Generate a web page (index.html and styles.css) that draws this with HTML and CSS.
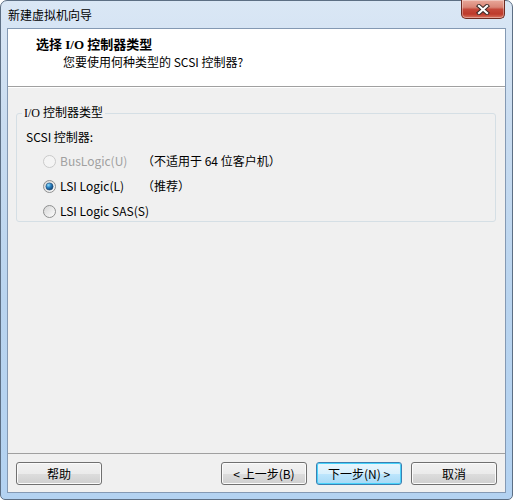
FILE: index.html
```html
<!DOCTYPE html>
<html lang="zh-CN">
<head>
  <meta charset="UTF-8" />
  <title>新建虚拟机向导</title>
  <link rel="stylesheet" href="styles.css">
</head>

<body>
  <svg class="defs" width="0" height="0">
    <defs>
      <linearGradient id="radioFill" x1="0" y1="0" x2="1" y2="1">
        <stop offset="0" stop-color="#d4d4d4" />
        <stop offset="1" stop-color="#ffffff" />
      </linearGradient>
      <radialGradient id="radioDot" cx="0.35" cy="0.3" r="0.8">
        <stop offset="0" stop-color="#8fe0ff" />
        <stop offset="0.45" stop-color="#2a7fbf" />
        <stop offset="1" stop-color="#0d3561" />
      </radialGradient>
    </defs>
  </svg>

  <div class="window">
    <div class="titlebar">
      <span class="title">新建虚拟机向导</span>
      <div class="close-btn">
        <svg width="14" height="11" viewBox="0 0 14 11">
          <path d="M3 2 L11 9 M11 2 L3 9" stroke="#3b2a28" stroke-width="4.2" stroke-linecap="square" />
          <path d="M3 2 L11 9 M11 2 L3 9" stroke="#ffffff" stroke-width="2.2" stroke-linecap="square" />
        </svg>
      </div>
    </div>

    <div class="client">
      <div class="header">
        <div class="header-title">选择 I/O 控制器类型</div>
        <div class="header-sub">您要使用何种类型的 SCSI 控制器?</div>
      </div>

      <div class="content">
        <fieldset class="group">
          <legend>I/O 控制器类型</legend>
          <div class="group-label">SCSI 控制器:</div>

          <div class="radio-row disabled">
            <label class="radio-label">
              <svg class="radio" width="13" height="13" viewBox="0 0 13 13">
                <circle cx="6.5" cy="6.5" r="6" fill="#f4f4f4" stroke="#c9c9c9" />
              </svg>
              BusLogic(U)
            </label>
            <span class="note">（不适用于 64 位客户机）</span>
          </div>

          <div class="radio-row">
            <label class="radio-label">
              <svg class="radio" width="13" height="13" viewBox="0 0 13 13">
                <circle cx="6.5" cy="6.5" r="6" fill="url(#radioFill)" stroke="#8e8f8f" />
                <circle cx="6.5" cy="6.5" r="3.6" fill="url(#radioDot)" stroke="#1e4e7a" stroke-width="0.6" />
              </svg>
              LSI Logic(L)
            </label>
            <span class="note">（推荐）</span>
          </div>

          <div class="radio-row">
            <label class="radio-label">
              <svg class="radio" width="13" height="13" viewBox="0 0 13 13">
                <circle cx="6.5" cy="6.5" r="6" fill="url(#radioFill)" stroke="#8e8f8f" />
              </svg>
              LSI Logic SAS(S)
            </label>
          </div>
        </fieldset>
      </div>

      <div class="footer">
        <button class="btn">帮助</button>
        <button class="btn push">&lt; 上一步(B)</button>
        <button class="btn default">下一步(N) &gt;</button>
        <button class="btn">取消</button>
      </div>
    </div>
  </div>
</body>
</html>
```

FILE: styles.css
```css
body {
  margin: 0;
  font-family: "Noto Sans CJK SC", sans-serif;
  font-size: 12px;
  color: #000;
  background: #fff;
}

.defs {
  position: absolute;
  width: 0;
  height: 0;
}

.window {
  box-sizing: border-box;
  width: 513px;
  height: 500px;
  border: 1px solid #5d6f84;
  border-radius: 7px 7px 5px 5px;
  padding: 0 6px 6px 6px;
  background: linear-gradient(to bottom, #dae7f5 0%, #c9dcf0 25%, #b9d4ef 60%, #b3d2f1 100%);
  display: flex;
  flex-direction: column;
}

.titlebar {
  height: 27px;
  display: flex;
  align-items: flex-start;
}

.title {
  padding: 6px 0 0 1px;
  line-height: 16px;
}

.close-btn {
  margin: -1px 1px 0 auto;
  width: 44px;
  height: 19px;
  box-sizing: border-box;
  border: 1px solid #6e2b22;
  border-top: none;
  border-radius: 0 0 5px 5px;
  background: linear-gradient(to bottom, #e9a89a 0%, #d98576 40%, #c4483a 52%, #bd3a2b 78%, #d9735f 100%);
  box-shadow: inset 0 0 0 1px rgba(255, 255, 255, 0.35);
  display: flex;
  justify-content: center;
  align-items: center;
}

.client {
  flex: 1;
  border: 1px solid #8499b3;
  background: #f0f0f0;
  display: flex;
  flex-direction: column;
}

.header {
  box-sizing: border-box;
  height: 58px;
  background: #fff;
  border-bottom: 1px solid #a0a0a0;
  padding: 8px 0 0 28px;
}

.header-title {
  font-family: "Liberation Serif", "Noto Sans CJK SC", serif;
  font-size: 13px;
  font-weight: bold;
  line-height: 16px;
}

.header-sub {
  line-height: 16px;
  padding-left: 27px;
  margin-top: 1px;
}

.content {
  flex: 1;
  border-top: 1px solid #fff;
  padding: 17px 9px 0 8px;
}

.group {
  margin: 0;
  padding: 8px 9px 2px 9px;
  border: 1px solid #d5dfe5;
  border-radius: 3px;
}

.group legend {
  font-family: "Liberation Serif", "Noto Sans CJK SC", serif;
  line-height: 16px;
  padding: 0 2px;
  margin-left: -4px;
}

.group-label {
  line-height: 16px;
  margin-bottom: 8px;
}

.radio-row {
  display: flex;
  align-items: center;
  line-height: 16px;
  height: 16px;
  margin-bottom: 9px;
  padding-left: 17px;
  white-space: nowrap;
}

.radio-row:last-child {
  margin-bottom: 0;
}

.radio-label {
  width: 99px;
  display: flex;
  align-items: center;
}

.radio {
  margin-right: 4px;
  flex: none;
}

.disabled .radio-label {
  color: #a0a0a0;
}

.footer {
  border-top: 1px solid #a0a0a0;
  padding: 8px 8px 7px 8px;
  display: flex;
  gap: 9px;
}

.btn {
  width: 86px;
  height: 23px;
  padding: 0;
  font-family: "Noto Sans CJK SC", sans-serif;
  font-size: 12px;
  color: #000;
  border: 1px solid #707070;
  border-radius: 3px;
  background: linear-gradient(to bottom, #f2f2f2 0%, #ebebeb 50%, #dddddd 51%, #cfcfcf 100%);
  box-shadow: inset 0 0 0 1px #fbfbfb;
}

.btn.push {
  margin-left: auto;
}

.btn.default {
  border-color: #3c7fb1;
  background: linear-gradient(to bottom, #eaf6fd 0%, #d9f0fc 50%, #bee6fd 51%, #a7d9f5 100%);
  box-shadow: inset 0 0 0 1px #48d3fb;
}
```
